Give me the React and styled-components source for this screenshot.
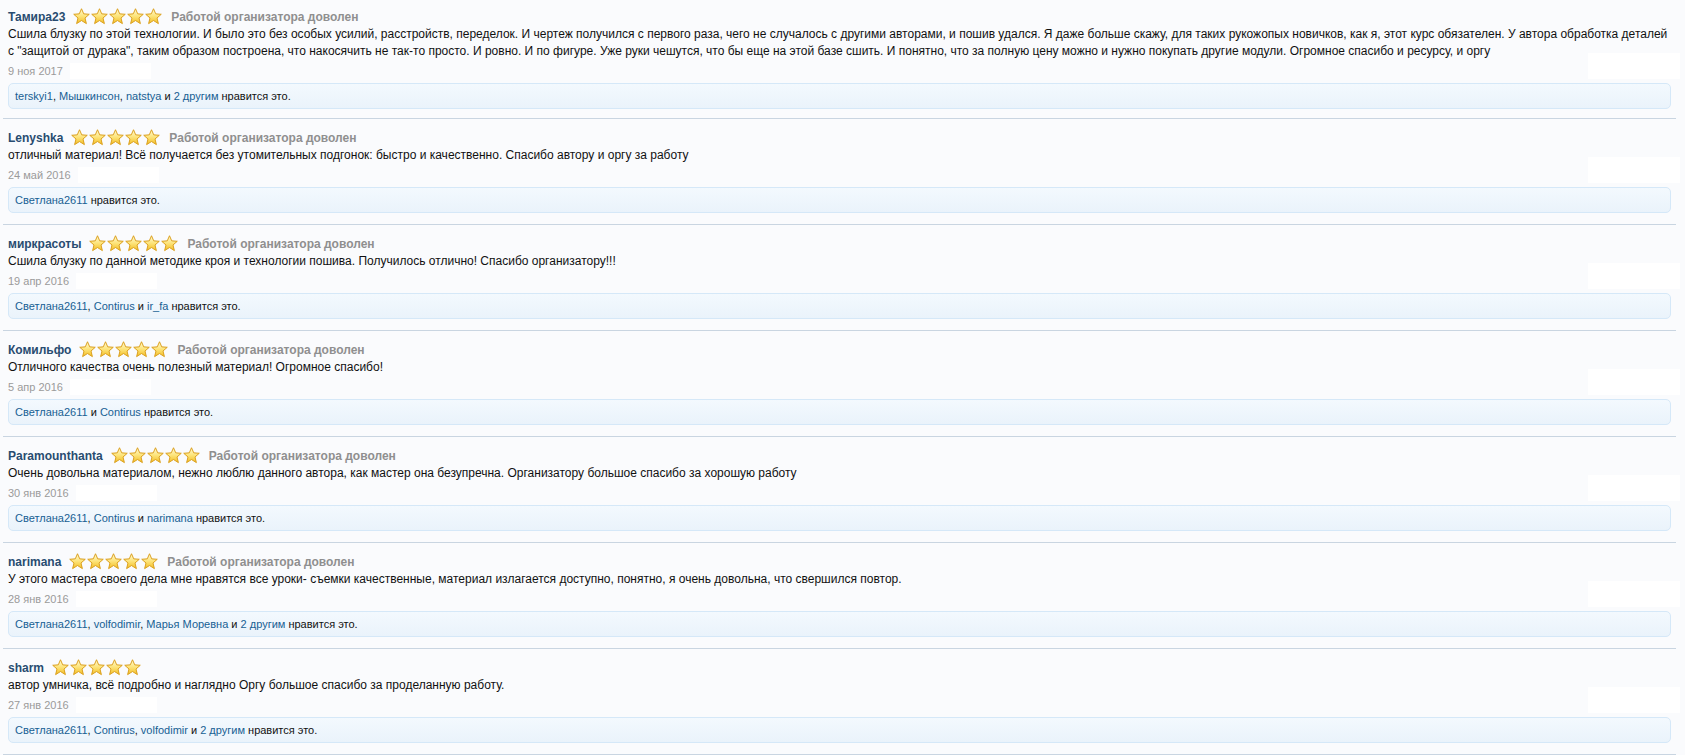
import React from "react";
import styled, { createGlobalStyle } from "styled-components";

const reviews = [
  {
    id: 1,
    user: "Тамира23",
    label: "Работой организатора доволен",
    text: 'Сшила блузку по этой технологии. И было это без особых усилий, расстройств, переделок. И чертеж получился с первого раза, чего не случалось с другими авторами, и пошив удался. Я даже больше скажу, для таких рукожопых новичков, как я, этот курс обязателен. У автора обработка деталей с "защитой от дурака", таким образом построена, что накосячить не так-то просто. И ровно. И по фигуре. Уже руки чешутся, что бы еще на этой базе сшить. И понятно, что за полную цену можно и нужно покупать другие модули. Огромное спасибо и ресурсу, и оргу',
    date: "9 ноя 2017",
    likes: ["terskyi1", "Мышкинсон", "natstya"],
    others: 2,
  },
  {
    id: 2,
    user: "Lenyshka",
    label: "Работой организатора доволен",
    text: "отличный материал! Всё получается без утомительных подгонок: быстро и качественно. Спасибо автору и оргу за работу",
    date: "24 май 2016",
    likes: ["Светлана2611"],
  },
  {
    id: 3,
    user: "миркрасоты",
    label: "Работой организатора доволен",
    text: "Сшила блузку по данной методике кроя и технологии пошива. Получилось отлично! Спасибо организатору!!!",
    date: "19 апр 2016",
    likes: ["Светлана2611", "Contirus", "ir_fa"],
  },
  {
    id: 4,
    user: "Комильфо",
    label: "Работой организатора доволен",
    text: "Отличного качества очень полезный материал! Огромное спасибо!",
    date: "5 апр 2016",
    likes: ["Светлана2611", "Contirus"],
  },
  {
    id: 5,
    user: "Paramounthanta",
    label: "Работой организатора доволен",
    text: "Очень довольна материалом, нежно люблю данного автора, как мастер она безупречна. Организатору большое спасибо за хорошую работу",
    date: "30 янв 2016",
    likes: ["Светлана2611", "Contirus", "narimana"],
  },
  {
    id: 6,
    user: "narimana",
    label: "Работой организатора доволен",
    text: "У этого мастера своего дела мне нравятся все уроки- съемки качественные, материал излагается доступно, понятно, я очень довольна, что свершился повтор.",
    date: "28 янв 2016",
    likes: ["Светлана2611", "volfodimir", "Марья Моревна"],
    others: 2,
  },
  {
    id: 7,
    user: "sharm",
    text: "автор умничка, всё подробно и наглядно Оргу большое спасибо за проделанную работу.",
    date: "27 янв 2016",
    likes: ["Светлана2611", "Contirus", "volfodimir"],
    others: 2,
  },
];

const GlobalStyle = createGlobalStyle`
  body {
    margin: 0;
    background: #fafbfd;
    font-family: "Liberation Sans", Arial, sans-serif;
    font-size: 12px;
    color: #111;
  }
`;

function Star({ id }) {
  return (
    <svg width="17" height="17" viewBox="0 0 16 16">
      <defs>
        <linearGradient id={id} x1="0" y1="0" x2="0" y2="1">
          <stop offset="0" stopColor="#fffbd6" />
          <stop offset="0.5" stopColor="#fde47a" />
          <stop offset="1" stopColor="#f2bd24" />
        </linearGradient>
      </defs>
      <path
        d="M8 0.7 L10.1 5.5 L15.3 5.9 L11.3 9.4 L12.6 14.7 L8 11.8 L3.4 14.7 L4.7 9.4 L0.7 5.9 L5.9 5.5 Z"
        fill={`url(#${id})`}
        stroke="#d99c18"
        strokeWidth="0.9"
        strokeLinejoin="round"
      />
    </svg>
  );
}

function Likes({ names, others }) {
  const parts = [];
  names.forEach((n, i) => {
    if (i > 0) {
      const last = i === names.length - 1 && !others;
      parts.push(last ? " и " : ", ");
    }
    parts.push(<Link key={n}>{n}</Link>);
  });
  if (others) {
    parts.push(" и ");
    parts.push(<Link key="others">{others} другим</Link>);
  }
  return (
    <LikesBox>
      {parts} нравится это.
    </LikesBox>
  );
}

function App() {
  return (
    <>
      <GlobalStyle />
      <List>
        {reviews.map((r) => (
          <Review key={r.id}>
            <Header>
              <UserName>{r.user}</UserName>
              <Stars>
                {[0, 1, 2, 3, 4].map((i) => (
                  <Star key={i} id={`star-${r.id}-${i}`} />
                ))}
              </Stars>
              {r.label && <RatingLabel>{r.label}</RatingLabel>}
            </Header>
            <Body>{r.text}</Body>
            <Meta>
              <DateText>{r.date}</DateText>
              <Blank />
              <Controls />
            </Meta>
            <Likes names={r.likes} others={r.others} />
          </Review>
        ))}
      </List>
    </>
  );
}

const List = styled.ol`
  list-style: none;
  margin: 0 9px 0 3px;
  padding: 0;
`;

const Review = styled.li`
  padding: 9px 5px 11px;
  border-bottom: 1px solid #c9d5e1;

  &:first-child {
    padding-top: 7px;
    padding-bottom: 9px;
  }
`;

const Header = styled.div`
  display: flex;
  align-items: center;
  height: 19px;
`;

const UserName = styled.a`
  font-weight: bold;
  color: #284c70;
  margin-right: 8px;
`;

const Stars = styled.span`
  display: flex;
  gap: 1px;
  margin-right: 9px;
`;

const RatingLabel = styled.span`
  font-weight: bold;
  color: #8f8f8f;
`;

const Body = styled.div`
  line-height: 17px;
`;

const Meta = styled.div`
  display: flex;
  align-items: flex-end;
  margin-top: 3px;
  height: 16px;
`;

const DateText = styled.span`
  font-size: 11px;
  line-height: 16px;
  color: #9a9a9a;
`;

const Blank = styled.span`
  width: 81px;
  height: 16px;
  margin-left: 7px;
  background: #fff;
`;

const Controls = styled.span`
  width: 92px;
  height: 26px;
  margin: -10px -9px 0 auto;
  background: #fff;
`;

const LikesBox = styled.div`
  margin-top: 4px;
  padding: 5px 6px;
  font-size: 11px;
  line-height: 14px;
  border: 1px solid #d5e8f8;
  border-radius: 5px;
  background: linear-gradient(to bottom, #f3f9fe, #eaf3fb);
`;

const Link = styled.a`
  color: #176093;
`;

export default App;
